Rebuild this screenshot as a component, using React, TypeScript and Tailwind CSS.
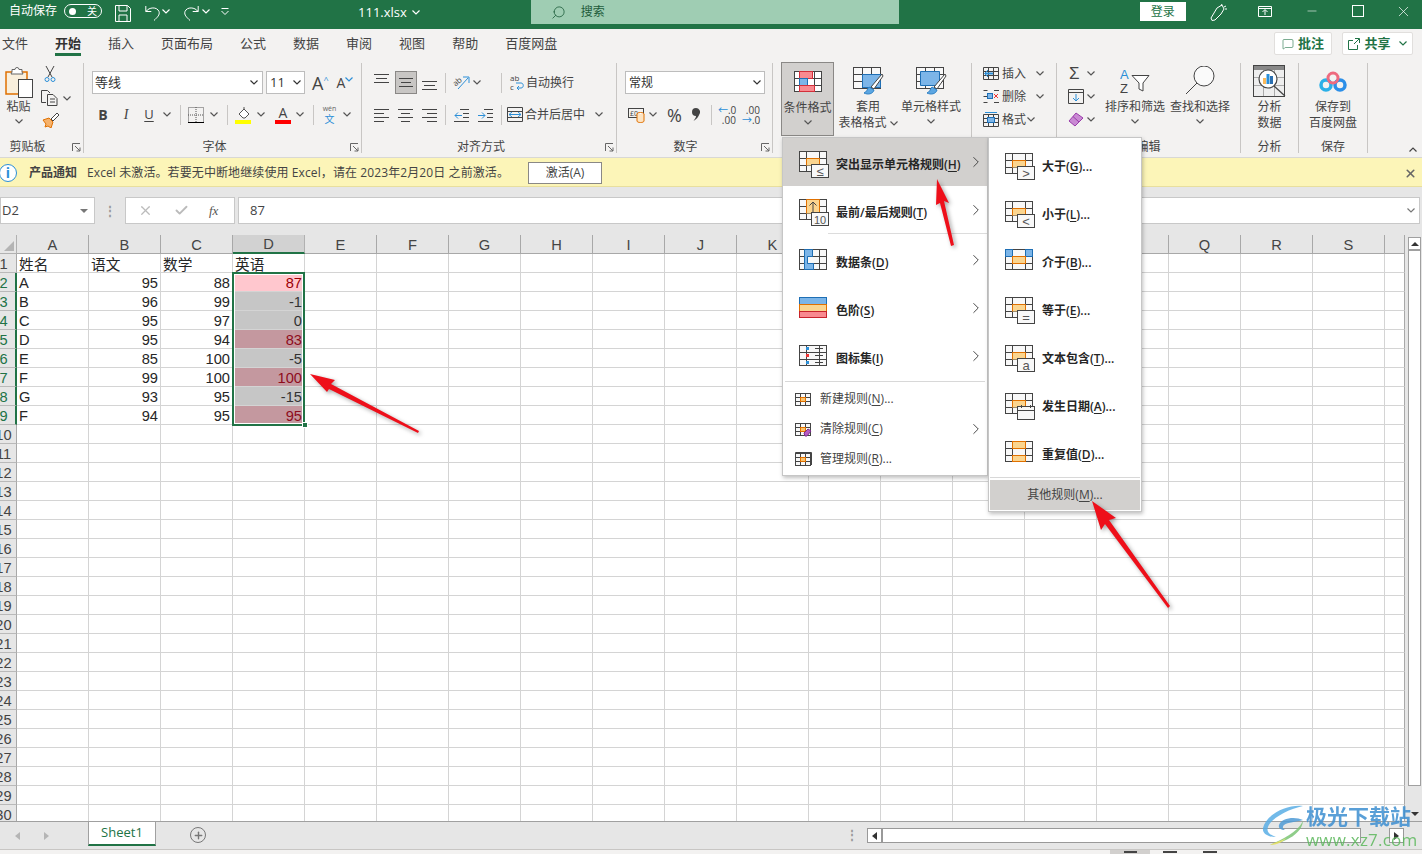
import type { ReactNode } from 'react';
import { Check, ChevronRight, MessageSquare, Minus, Plus, Search, X } from 'lucide-react';

const INK = '#444';
const ORANGE = '#e07000';
const BLUE = '#2b8fd8';

function Chev({ color = '#555', className = '' }: { color?: string; className?: string }) {
  return (
    <svg width="8" height="5" viewBox="0 0 8 5" className={`shrink-0 ${className}`}>
      <path d="M.5.5 4 4 7.5.5" fill="none" stroke={color} strokeWidth="1.2" />
    </svg>
  );
}

function Launcher() {
  return (
    <svg width="9" height="9" viewBox="0 0 9 9" className="absolute bottom-[1px] right-[2px]">
      <path d="M.5 8V.5H8M3 3l5 5M8 4.5V8H4.5" fill="none" stroke="#666" />
    </svg>
  );
}

function Group({ w, label, labelPad = '', launcher, children }: { w: string; label: string; labelPad?: string; launcher?: boolean; children: ReactNode }) {
  return (
    <div className={`relative flex h-full shrink-0 flex-col border-r border-[#c8c6c4] ${w}`}>
      <div className="flex min-h-0 flex-1">{children}</div>
      <div className={`h-[15px] text-center text-[12px] leading-[17px] text-[#444] ${labelPad}`}>{label}</div>
      {launcher && <Launcher />}
    </div>
  );
}

function Lines({ rows, color = INK }: { rows: number[][]; color?: string }) {
  return (
    <svg width="16" height="16" viewBox="0 0 16 16" className="shrink-0">
      {rows.map(([a, b, y]) => (
        <path key={`${a}-${y}`} d={`M${a} ${y + 0.5}H${b}`} stroke={color} />
      ))}
    </svg>
  );
}

function VSep({ className }: { className: string }) {
  return <div className={`h-[20px] w-px shrink-0 bg-[#c8c6c4] ${className}`} />;
}

// the grid drawing most of the conditional format icons start from
function Sheet({ children, badge }: { children?: ReactNode; badge?: ReactNode }) {
  return (
    <svg width="31" height="27" viewBox="0 0 31 27" className="shrink-0">
      <rect x=".5" y=".5" width="27" height="20" fill="#f8f8f8" stroke={INK} />
      <path d="M7.5 0v21M20.5 0v21M0 7.5h28M0 14.5h28" stroke={INK} />
      {children}
      {badge && (
        <g>
          <rect x="12.5" y="13.5" width="17" height="13" fill="#f8f8f8" stroke={INK} />
          {badge}
        </g>
      )}
    </svg>
  );
}

const OrangeCell = () => (
  <path d="M7.5 14.5v-7h13v7" fill="#fbd58f" stroke={ORANGE} />
);

function BadgeText({ t, size = 13 }: { t: string; size?: number }) {
  return (
    <text x="21" y="24.5" textAnchor="middle" fontSize={size} fill="#555" fontFamily="Liberation Sans, sans-serif">
      {t}
    </text>
  );
}

function SmallSheet({ children }: { children?: ReactNode }) {
  return (
    <svg width="17" height="15" viewBox="0 0 17 15" className="shrink-0">
      <rect x=".5" y="1.5" width="15" height="12" fill="#f8f8f8" stroke={INK} />
      <path d="M5.5 1v13M10.5 1v13M0 5.5h16M0 9.5h16" stroke={INK} />
      <rect x="5.5" y="5.5" width="5" height="4" fill="#fbc56f" stroke={ORANGE} />
      {children}
    </svg>
  );
}

function Key({ k }: { k: string }) {
  return (
    <>
      (<span className="underline underline-offset-2">{k}</span>)
    </>
  );
}

function MainItem({ icon, name, k, active }: { icon: ReactNode; name: string; k: string; active?: boolean }) {
  return (
    <div className={`flex h-[48px] items-center pl-[16px] pr-[2px] pt-[5px] ${active ? 'bg-[#d2d0ce]' : ''}`}>
      <div className="w-[37px] shrink-0">{icon}</div>
      <span className="flex-1 text-[12px] font-semibold leading-none text-[#262626]">
        {name}
        <Key k={k} />
      </span>
      <ChevronRight size={18} strokeWidth={1.3} color={INK} className="-mt-[6px]" />
    </div>
  );
}

function SmallItem({ icon, name, k, more }: { icon: ReactNode; name: string; k: string; more?: boolean }) {
  return (
    <div className="flex h-[30px] items-center pl-[12px] pr-[2px]">
      <div className="w-[25px] shrink-0">{icon}</div>
      <span className="flex-1 text-[12px] leading-none text-[#444]">
        {name}
        <Key k={k} />
        {!more && '...'}
      </span>
      {more && <ChevronRight size={18} strokeWidth={1.3} color={INK} />}
    </div>
  );
}

function SubItem({ icon, name, k }: { icon: ReactNode; name: string; k: string }) {
  return (
    <div className="flex h-[48px] items-center pl-[16px] pt-[9px]">
      <div className="w-[37px] shrink-0">{icon}</div>
      <span className="text-[12px] font-semibold leading-none text-[#262626]">
        {name}
        <Key k={k} />
        ...
      </span>
    </div>
  );
}

function ConditionalMenus() {
  return (
    <>
      <div className="absolute left-[782px] top-[137px] z-10 w-[206px] border border-[#c6c6c6] bg-white pb-px shadow-[1px_2px_4px_rgba(0,0,0,0.25)]">
        <MainItem
          active
          name="突出显示单元格规则"
          k="H"
          icon={<Sheet badge={<BadgeText t="≤" />}><OrangeCell /></Sheet>}
        />
        <div className="relative mb-[2px]">
          <MainItem
            name="最前/最后规则"
            k="T"
            icon={
              <Sheet badge={<BadgeText t="10" size={11} />}>
                <path d="M7.5 14.5V.5h13v14" fill="#fbd58f" stroke={ORANGE} />
                <path d="M14 13V3M10.5 6.5 14 3l3.5 3.5" fill="none" stroke={INK} />
              </Sheet>
            }
          />
          <div className="absolute bottom-0 left-[45px] right-0 h-px bg-[#dcdcdc]" />
        </div>
        <MainItem
          name="数据条"
          k="D"
          icon={
            <Sheet>
              <path d="M5.5.5h8v7h-5v7h6v6h-9z" fill="#7cb5e8" stroke="#1e6fb5" />
            </Sheet>
          }
        />
        <MainItem
          name="色阶"
          k="S"
          icon={
            <Sheet>
              <rect x=".5" y=".5" width="27" height="7" fill="#7cb5e8" stroke="#1e6fb5" />
              <rect x=".5" y="7.5" width="27" height="7" fill="#fbd58f" stroke={ORANGE} />
              <rect x=".5" y="14.5" width="27" height="6" fill="#f98a90" stroke="#c8232c" />
            </Sheet>
          }
        />
        <MainItem
          name="图标集"
          k="I"
          icon={
            <Sheet>
              <rect x="7" y="2" width="3" height="3" fill={BLUE} />
              <rect x="7" y="9" width="3" height="3" fill="#e33" />
              <rect x="7" y="16" width="3" height="3" fill={BLUE} />
              <path d="M16 3.5h8M16 10.5h8M16 17.5h8" stroke={INK} />
            </Sheet>
          }
        />
        <div className="mx-[2px] mt-[1px] mb-[2px] h-px bg-[#d8d8d8]" />
        <SmallItem name="新建规则" k="N" icon={<SmallSheet />} />
        <SmallItem
          more
          name="清除规则"
          k="C"
          icon={
            <SmallSheet>
              <path d="M9 11l4-4 3 2-4 5h-2z" fill="#b85bc4" stroke="#7b2f8a" />
            </SmallSheet>
          }
        />
        <SmallItem
          name="管理规则"
          k="R"
          icon={
            <SmallSheet>
              <path d="M.5 1V.5H16.5V13" fill="none" stroke={INK} />
            </SmallSheet>
          }
        />
      </div>

      <div className="absolute left-[988px] top-[137px] z-10 w-[154px] border border-[#c6c6c6] bg-white shadow-[1px_2px_4px_rgba(0,0,0,0.25)]">
        <SubItem name="大于" k="G" icon={<Sheet badge={<BadgeText t=">" />}><OrangeCell /></Sheet>} />
        <SubItem name="小于" k="L" icon={<Sheet badge={<BadgeText t="<" />}><OrangeCell /></Sheet>} />
        <SubItem
          name="介于"
          k="B"
          icon={
            <Sheet>
              <rect x=".5" y=".5" width="7" height="7" fill="#7cb5e8" stroke="#1e6fb5" />
              <rect x="20.5" y=".5" width="7" height="7" fill="#7cb5e8" stroke="#1e6fb5" />
              <rect x="7.5" y="7.5" width="13" height="7" fill="#fbd58f" stroke={ORANGE} />
            </Sheet>
          }
        />
        <SubItem name="等于" k="E" icon={<Sheet badge={<BadgeText t="=" />}><OrangeCell /></Sheet>} />
        <SubItem name="文本包含" k="T" icon={<Sheet badge={<BadgeText t="a" />}><OrangeCell /></Sheet>} />
        <SubItem
          name="发生日期"
          k="A"
          icon={
            <Sheet badge={<path d="M13 17.5h16M16.5 12v3M25.5 12v3" stroke={INK} />}>
              <OrangeCell />
            </Sheet>
          }
        />
        <SubItem
          name="重复值"
          k="D"
          icon={
            <Sheet>
              <rect x="7.5" y=".5" width="13" height="7" fill="#fbd58f" stroke={ORANGE} />
              <rect x="7.5" y="14.5" width="13" height="6" fill="#fbd58f" stroke={ORANGE} />
            </Sheet>
          }
        />
        <div className="mx-[1px] mt-[3px] h-px bg-[#d8d8d8]" />
        <div className="m-[1px] mt-[2px] flex h-[30px] items-center justify-center bg-[#d2d0ce] text-[12px] leading-none text-[#444]">
          其他规则
          <Key k="M" />
          ...
        </div>
      </div>
    </>
  );
}

function TitleBar() {
  return (
    <div className="flex h-[29px] shrink-0 items-start bg-[#217346] text-white">
      <span className="ml-[9px] mt-[4px] text-[12px] leading-[14px]">自动保存</span>
      <div className="ml-[7px] mt-[4px] flex h-[14px] w-[38px] items-center justify-between rounded-full border border-white pl-[4px] pr-[4px]">
        <div className="h-[7px] w-[7px] rounded-full bg-white" />
        <span className="text-[10px] leading-none">关</span>
      </div>
      <svg width="16" height="17" viewBox="0 0 16 17" className="ml-[13px] mt-[5px]">
        <path d="M.5.5h12l3 3v13H.5zM4 .5V6h8V.5M4 16.5V10h8v6.5" fill="none" stroke="#fff" />
      </svg>
      <svg width="15" height="16" viewBox="0 0 15 16" className="ml-[14px] mt-[5px]">
        <path d="M.8 1v5.5h5.5M1 6.5C4 2 12 1.5 14 6.5c1.2 3.5-2 6-5 9" fill="none" stroke="#fff" />
      </svg>
      <Chev color="#fff" className="ml-[2px] mt-[9px]" />
      <svg width="15" height="16" viewBox="0 0 15 16" className="ml-[14px] mt-[5px]">
        <path d="M14.2 1v5.5H8.7M14 6.5C11 2 3 1.5 1 6.5c-1.2 3.5 2 6 5 9" fill="none" stroke="#fff" />
      </svg>
      <Chev color="#fff" className="ml-[3px] mt-[9px]" />
      <svg width="8" height="8" viewBox="0 0 8 8" className="ml-[11px] mt-[8px]">
        <path d="M.5.5h7M.5 3 4 6.5 7.5 3" fill="none" stroke="#fff" />
      </svg>
      <span className="ml-[129px] mt-[4px] text-[13px] leading-[16px]">111.xlsx</span>
      <Chev color="#fff" className="ml-[5px] mt-[10px]" />
      <div className="ml-[111px] flex h-[24px] w-[368px] items-center bg-[#9fcdb3] pl-[20px] text-[#1e5c3b]">
        <Search size={15} strokeWidth={1.3} className="-scale-x-100" />
        <span className="ml-[15px] text-[12px]">搜索</span>
      </div>
      <div className="ml-[241px] mt-[2px] flex h-[19px] w-[46px] items-center justify-center bg-white text-[12px] text-[#217346]">
        登录
      </div>
      <svg width="18" height="18" viewBox="0 0 18 18" className="ml-[24px] mt-[3px]">
        <path d="M1 15 7 5l5-3 2 4-3 5-6 6-3 .5zM11 3l1-2M14 4l2-1M15 6h2" fill="none" stroke="#fff" />
      </svg>
      <svg width="14" height="11" viewBox="0 0 14 11" className="ml-[30px] mt-[6px]">
        <path d="M.5.5h13v10H.5zM.5 2.5h13M7 9V4M4.5 6 7 3.5 9.5 6" fill="none" stroke="#fff" />
      </svg>
      <Minus size={14} strokeWidth={1} className="ml-[33px] mt-[4px]" />
      <div className="ml-[33px] mt-[5px] h-[12px] w-[12px] border border-white" />
      <X size={17} strokeWidth={1} className="ml-[31px] mt-[3px]" />
    </div>
  );
}

function TabRow() {
  const tabs = ['文件', '开始', '插入', '页面布局', '公式', '数据', '审阅', '视图', '帮助', '百度网盘'];
  return (
    <div className="flex h-[30px] shrink-0 items-start bg-[#f3f2f1] pl-[2px]">
      <div className="flex gap-[27px]">
        {tabs.map((t) => (
          <div key={t} className="relative h-[27px] pt-[5px] text-[13px] leading-[18px] text-[#444]">
            <span className={t === '开始' ? 'font-bold text-[#333]' : ''}>{t}</span>
            {t === '开始' && <div className="absolute bottom-0 left-0 right-0 h-[3px] bg-[#217346]" />}
          </div>
        ))}
      </div>
      <div className="ml-auto mt-[3px] flex h-[23px] w-[58px] items-center justify-center gap-[4px] rounded-[2px] border border-[#e1dfdd] bg-white text-[13px] font-bold text-[#217346]">
        <MessageSquare size={12} strokeWidth={1.2} />
        批注
      </div>
      <div className="ml-[10px] mr-[9px] mt-[3px] flex h-[23px] w-[71px] items-center justify-center gap-[4px] rounded-[2px] border border-[#e1dfdd] bg-white text-[13px] font-bold text-[#217346]">
        <svg width="12" height="13" viewBox="0 0 12 13">
          <path d="M7 1.5h4.5V6M11 2 6 7M5 3.5H.5v9h9V8" fill="none" stroke="#217346" />
        </svg>
        共享
        <Chev color="#217346" className="ml-[4px]" />
      </div>
    </div>
  );
}

function ClipboardGroup() {
  return (
    <Group w="w-[84px]" label="剪贴板" labelPad="pr-[28px]" launcher>
      <div className="flex w-[36px] flex-col items-center pl-[1px] pt-[3px]">
        <svg width="28" height="32" viewBox="0 0 28 32">
          <path d="M1 6h21v22H1z" fill="#f9efdc" stroke={ORANGE} strokeWidth="1.5" />
          <path d="M7 6V3.5h3a2 2 0 0 1 4 0h3V6l1 2H6z" fill="#fff" stroke="#666" />
          <rect x="13.5" y="13.5" width="14" height="18" fill="#fff" stroke={INK} />
        </svg>
        <span className="mt-[1px] text-[12px] leading-[16px] text-[#444]">粘贴</span>
        <Chev className="mt-[4px]" />
      </div>
      <div className="flex flex-col pl-[5px] pt-[3px]">
        <svg width="12" height="17" viewBox="0 0 12 17" className="ml-[3px]">
          <path d="M2 0l6 11M10 0 4 11" stroke={INK} fill="none" />
          <circle cx="3" cy="13.5" r="2" fill="none" stroke={BLUE} />
          <circle cx="9" cy="13.5" r="2" fill="none" stroke={BLUE} />
        </svg>
        <div className="mt-[7px] flex items-center">
          <svg width="17" height="16" viewBox="0 0 17 16">
            <path d="M5 12.5H.5V.5h6L9 3M6.5 4.5H12l4 4v7H6.5z" fill="none" stroke={INK} />
            <path d="M9 9h5M9 12h5" stroke={INK} />
          </svg>
          <Chev className="ml-[5px]" />
        </div>
        <svg width="17" height="16" viewBox="0 0 17 16" className="ml-[1px] mt-[6px]">
          <path d="M1 8l6-2 4 4-2 6-3-2-3 1 1-3z" fill="#f6b26b" stroke={ORANGE} />
          <path d="M9 7l6-6 2 2-6 6z" fill="#fff" stroke={INK} />
        </svg>
      </div>
    </Group>
  );
}

function FontGroup() {
  return (
    <Group w="w-[278px]" label="字体" labelPad="pr-[16px]" launcher>
      <div className="flex flex-col pl-[8px] pt-[8px]">
        <div className="flex h-[23px] items-center">
          <div className="flex h-full w-[171px] items-center justify-between border border-[#bdbdbd] bg-white px-[2px] text-[13px] text-[#333]">
            等线
            <Chev color="#333" className="mr-[2px]" />
          </div>
          <div className="ml-[3px] flex h-full w-[39px] items-center justify-between border border-[#bdbdbd] bg-white px-[3px] text-[13px] text-[#333]">
            11
            <Chev color="#333" />
          </div>
          <span className="ml-[7px] text-[18px] leading-none text-[#444]">A</span>
          <span className="mb-[6px] text-[9px] leading-none text-[#2b8fd8]">^</span>
          <span className="ml-[8px] text-[14px] leading-none text-[#444]">A</span>
          <Chev color={BLUE} className="mb-[6px]" />
        </div>
        <div className="mt-[9px] flex h-[23px] items-center text-[#444]">
          <span className="w-[22px] text-center text-[14px] font-bold">B</span>
          <span className="w-[24px] text-center font-['Liberation_Serif',serif] text-[14px] italic">I</span>
          <span className="w-[22px] text-center text-[13px] underline underline-offset-2">U</span>
          <Chev className="ml-[3px]" />
          <VSep className="ml-[9px]" />
          <svg width="16" height="16" viewBox="0 0 16 16" className="ml-[7px]">
            <path d="M.5.5h15v15H.5zM8 0v15M0 8h15" fill="none" stroke="#555" strokeDasharray="1 1" />
            <path d="M0 15.5h16" stroke="#000" />
          </svg>
          <Chev className="ml-[6px]" />
          <VSep className="ml-[9px]" />
          <svg width="17" height="18" viewBox="0 0 17 18" className="ml-[7px]">
            <path d="M4 8l5-5 5 5-4 4H8z" fill="#fff" stroke="#555" />
            <path d="M9 3V1" stroke="#555" />
            <rect x="0" y="14" width="16" height="4" fill="#ffff00" />
          </svg>
          <Chev className="ml-[5px]" />
          <div className="ml-[10px] flex w-[16px] flex-col items-center">
            <span className="text-[14px] leading-[14px] text-[#444]">A</span>
            <div className="h-[4px] w-[16px] bg-[#ff0000]" />
          </div>
          <Chev className="ml-[5px]" />
          <VSep className="ml-[9px]" />
          <div className="ml-[8px] flex w-[15px] flex-col items-center gap-[2px] leading-none">
            <span className="text-[7px] text-[#666]">wén</span>
            <span className="text-[10px] text-[#2b8fd8]">文</span>
          </div>
          <Chev className="ml-[6px]" />
        </div>
      </div>
    </Group>
  );
}

function AlignGroup() {
  return (
    <Group w="w-[255px]" label="对齐方式" labelPad="pr-[16px]" launcher>
      <div className="flex flex-col pl-[11px] pt-[8px]">
        <div className="flex h-[23px] items-center">
          <div className="mb-[5px] ml-[1px]"><Lines rows={[[0, 15, 2], [2, 13, 6], [0, 15, 10]]} /></div>
          <div className="ml-[5px] flex h-[23px] w-[22px] items-center justify-center border border-[#8a8886] bg-[#c8c6c4]">
            <Lines rows={[[1, 15, 3], [3, 13, 7], [1, 15, 11]]} />
          </div>
          <div className="ml-[5px] mt-[7px]"><Lines rows={[[0, 15, 3], [2, 13, 7], [0, 15, 11]]} /></div>
          <VSep className="ml-[7px]" />
          <svg width="17" height="17" viewBox="0 0 17 17" className="ml-[7px] overflow-visible">
            <text x="0" y="10" fontSize="8" fill="#444" fontFamily="Open Sans, sans-serif" transform="rotate(-40 5 8)">ab</text>
            <path d="M5 15 15 4M10 3h6v6" fill="none" stroke={BLUE} />
          </svg>
          <Chev className="ml-[3px]" />
          <VSep className="ml-[20px]" />
          <svg width="14" height="17" viewBox="0 0 14 17" className="ml-[8px] overflow-visible">
            <text x="0" y="7" fontSize="8" fill="#444" fontFamily="Open Sans, sans-serif">ab</text>
            <text x="0" y="16" fontSize="8" fill="#444" fontFamily="Open Sans, sans-serif">c</text>
            <path d="M7 14h4c3 0 3-5 0-5H6M9 12l-2 2 2 2" fill="none" stroke={BLUE} />
          </svg>
          <span className="ml-[2px] text-[12px] text-[#444]">自动换行</span>
        </div>
        <div className="mt-[9px] flex h-[23px] items-center">
          <div className="ml-[1px]"><Lines rows={[[0, 15, 2], [0, 10, 6], [0, 15, 10], [0, 10, 14]]} /></div>
          <div className="ml-[8px]"><Lines rows={[[0, 15, 2], [3, 12, 6], [0, 15, 10], [3, 12, 14]]} /></div>
          <div className="ml-[8px]"><Lines rows={[[0, 15, 2], [5, 15, 6], [0, 15, 10], [5, 15, 14]]} /></div>
          <VSep className="ml-[7px]" />
          <svg width="16" height="16" viewBox="0 0 16 16" className="ml-[8px]">
            <path d="M6 2.5h9M9 6.5h6M9 10.5h6M0 14.5h15" stroke={INK} />
            <path d="M8 8.5H1M4 5.5l-3 3 3 3" fill="none" stroke={BLUE} />
          </svg>
          <svg width="16" height="16" viewBox="0 0 16 16" className="ml-[8px]">
            <path d="M6 2.5h9M9 6.5h6M9 10.5h6M0 14.5h15" stroke={INK} />
            <path d="M0 8.5h7M4 5.5l3 3-3 3" fill="none" stroke={BLUE} />
          </svg>
          <VSep className="ml-[7px]" />
          <svg width="16" height="15" viewBox="0 0 16 15" className="ml-[5px]">
            <path d="M.5.5h15v14H.5zM0 4.5h16M0 10.5h16" fill="none" stroke={INK} />
            <path d="M2 7.5h12M5 5 2 7.5 5 10M11 5l3 2.5L11 10" fill="none" stroke={BLUE} />
          </svg>
          <span className="ml-[2px] text-[12px] text-[#444]">合并后居中</span>
          <Chev className="ml-[10px]" />
        </div>
      </div>
    </Group>
  );
}

function NumberGroup() {
  return (
    <Group w="w-[156px]" label="数字" labelPad="pr-[18px]" launcher>
      <div className="flex flex-col pl-[8px] pt-[8px]">
        <div className="flex h-[23px] w-[140px] items-center justify-between border border-[#bdbdbd] bg-white px-[3px] text-[12px] text-[#333]">
          常规
          <Chev color="#333" />
        </div>
        <div className="mt-[9px] flex h-[23px] items-center text-[#444]">
          <svg width="17" height="17" viewBox="0 0 17 17" className="ml-[3px]">
            <rect x=".5" y="2.5" width="15" height="9" fill="none" stroke={INK} />
            <text x="2" y="10" fontSize="7" fill="#444" fontFamily="Open Sans, sans-serif">£0</text>
            <ellipse cx="12.5" cy="8" rx="3.5" ry="1.5" fill="#fff" stroke={ORANGE} />
            <path d="M9 8v7c0 2 7 2 7 0V8" fill="#fce4c4" stroke={ORANGE} />
          </svg>
          <Chev className="ml-[4px]" />
          <span className="ml-[10px] text-[18px] leading-none">%</span>
          <svg width="8" height="13" viewBox="0 0 8 13" className="ml-[10px]">
            <path d="M4 0a4 4 0 0 1 3.500 6c-1 3-3 5-6 7 1.500-2 2.500-3.500 2.500-5A4 4 0 0 1 4 0z" fill={INK} />
          </svg>
          <VSep className="ml-[11px]" />
          <div className="ml-[6px] flex w-[18px] flex-col text-[10px] leading-[10px]">
            <span className="whitespace-nowrap text-right"><span className="text-[#2b8fd8]">←</span>.0</span>
            <span className="text-right">.00</span>
          </div>
          <div className="ml-[6px] flex w-[18px] flex-col text-right text-[10px] leading-[10px]">
            <span>.00</span>
            <span className="whitespace-nowrap"><span className="text-[#2b8fd8]">→</span>.0</span>
          </div>
        </div>
      </div>
    </Group>
  );
}

function BrushGrid({ fill }: { fill: ReactNode }) {
  return (
    <svg width="31" height="29" viewBox="0 0 31 29">
      <rect x=".5" y=".5" width="27" height="21" fill="#f8f8f8" stroke={INK} />
      <path d="M9.5 0v21M18.5 0v21M0 7.5h28M0 14.5h28" stroke={INK} />
      {fill}
      <path d="M29 7 18 20l3 2L30 9z" fill="#fff" stroke={INK} />
      <path d="M16 20c-2 2-2 5-5 6 4 2 9 1 10-3z" fill="#5ba6e2" stroke="#2b7fc4" />
    </svg>
  );
}

function LargeBtn({ w, active, icon, lines, chevLine }: { w: string; active?: boolean; icon: ReactNode; lines: string[]; chevLine?: boolean }) {
  return (
    <div className={`-mt-[1px] flex h-[74px] shrink-0 flex-col items-center pt-[4px] ${w} ${active ? 'border border-[#8a8886] bg-[#d2d0ce]' : ''}`}>
      <div className="flex h-[30px] items-center">{icon}</div>
      <div className="mt-[3px] text-center text-[12px] leading-[16px] text-[#444]">
        {lines.map((l, i) => (
          <div key={l} className="flex items-center justify-center whitespace-nowrap">
            {l}
            {chevLine && i === lines.length - 1 && <Chev className="ml-[3px]" />}
          </div>
        ))}
      </div>
      {!chevLine && lines.length === 1 && <Chev className="mt-[4px]" />}
    </div>
  );
}

function StylesGroup() {
  return (
    <Group w="w-[199px]" label="样式">
      <div className="flex pl-[8px]">
        <LargeBtn
          active
          w="w-[53px]"
          lines={['条件格式']}
          icon={
            <svg width="28" height="22" viewBox="0 0 28 22">
              <rect x=".5" y=".5" width="27" height="20" fill="#fff" stroke={INK} />
              <path d="M7.5 0v21M20.5 0v21M0 7.5h28M0 14.5h28" stroke={INK} />
              <rect x="5.5" y=".5" width="13" height="7" fill="#f98a90" stroke="#d32f3a" />
              <rect x="5.5" y="7.5" width="8" height="7" fill="#7cb5e8" stroke="#1e6fb5" />
              <rect x="5.5" y="14.5" width="15" height="6" fill="#f98a90" stroke="#d32f3a" />
            </svg>
          }
        />
        <div className="ml-[4px]">
          <LargeBtn
            chevLine
            w="w-[60px]"
            lines={['套用', '表格格式']}
            icon={
              <BrushGrid
                fill={<path d="M9.5 7.5h18v13h-18z" fill="#7cb5e8" stroke="#1e6fb5" />}
              />
            }
          />
        </div>
        <div className="ml-[3px]">
          <LargeBtn
            w="w-[60px]"
            lines={['单元格样式']}
            icon={
              <BrushGrid
                fill={<path d="M4.5 4.5h19v14h-19z" fill="#7cb5e8" stroke="#1e6fb5" />}
              />
            }
          />
        </div>
      </div>
    </Group>
  );
}

function CellsGroup() {
  return (
    <Group w="w-[85px]" label="单元格">
      <div className="-mt-[1px] flex flex-col pl-[11px] text-[12px] leading-none text-[#444]">
        <div className="flex h-[23px] items-center">
          <svg width="17" height="14" viewBox="0 0 17 14">
            <path d="M.5.5h15v12H.5zM0 4.5h16M0 8.5h16M5.5 1v12M10.5 1v12" fill="none" stroke={INK} />
            <path d="M2 6.5h8" stroke={BLUE} strokeWidth="2" />
            <path d="M5 3 1.5 6.5 5 10" fill="none" stroke={BLUE} />
          </svg>
          <span className="ml-[2px]">插入</span>
          <Chev className="ml-[10px]" />
        </div>
        <div className="flex h-[23px] items-center">
          <svg width="17" height="14" viewBox="0 0 17 14">
            <path d="M.5.5h4M11 .5h5M.5 12.5h4M11 12.5h5M.5 6.5h4" fill="none" stroke={INK} />
            <rect x="4.5" y="3.5" width="5" height="5" fill="#7cb5e8" stroke="#1e6fb5" />
            <path d="M11 4l4 4M15 4l-4 4" stroke="#e33" />
          </svg>
          <span className="ml-[2px]">删除</span>
          <Chev className="ml-[10px]" />
        </div>
        <div className="flex h-[23px] items-center">
          <svg width="17" height="15" viewBox="0 0 17 15">
            <path d="M.5 2.5h15v12H.5zM0 6.5h16M0 10.5h16M5.5 3v12M10.5 3v12" fill="none" stroke={INK} />
            <rect x="4.5" y="5.5" width="7" height="5" fill="#7cb5e8" stroke="#1e6fb5" />
            <path d="M2 .5h12" stroke={BLUE} />
          </svg>
          <span className="ml-[2px]">格式</span>
          <Chev className="ml-[1px]" />
        </div>
      </div>
    </Group>
  );
}

function EditGroup() {
  return (
    <Group w="w-[184px]" label="编辑">
      <div className="flex">
        <div className="-mt-[1px] flex w-[46px] flex-col pl-[11px]">
          <div className="flex h-[23px] items-center">
            <span className="ml-[1px] w-[15px] font-['Liberation_Sans',sans-serif] text-[17px] leading-none text-[#444]">Σ</span>
            <Chev className="ml-[3px]" />
          </div>
          <div className="flex h-[23px] items-center">
            <svg width="16" height="15" viewBox="0 0 16 15">
              <path d="M.5.5h15v14H.5zM0 3.5h16" fill="none" stroke={INK} />
              <path d="M8 5v7M5 9l3 3 3-3" fill="none" stroke={BLUE} />
            </svg>
            <Chev className="ml-[3px]" />
          </div>
          <div className="flex h-[23px] items-center">
            <svg width="16" height="15" viewBox="0 0 16 15">
              <path d="M8 1 15 6 7 14 1 9z" fill="#c98ad3" stroke="#9a3dab" />
              <path d="M5 4.5 11 10" stroke="#9a3dab" />
            </svg>
            <Chev className="ml-[3px]" />
          </div>
        </div>
        <div className="ml-[2px]">
          <LargeBtn
            w="w-[60px]"
            lines={['排序和筛选']}
            icon={
              <svg width="30" height="28" viewBox="0 0 30 28">
                <text x="0" y="12" fontSize="13" fill={BLUE} fontFamily="Liberation Sans, sans-serif">A</text>
                <text x="0" y="26" fontSize="13" fill="#444" fontFamily="Liberation Sans, sans-serif">Z</text>
                <path d="M12 8.5h17L23 16v8l-4-2v-6z" fill="#fff" stroke={INK} />
              </svg>
            }
          />
        </div>
        <div className="ml-[5px]">
          <LargeBtn
            w="w-[60px]"
            lines={['查找和选择']}
            icon={
              <svg width="30" height="30" viewBox="0 0 30 30">
                <circle cx="19" cy="10" r="10" fill="#fafafa" stroke={INK} />
                <path d="M12 17 1 28" stroke={INK} />
              </svg>
            }
          />
        </div>
      </div>
    </Group>
  );
}

function AnalysisGroup() {
  return (
    <Group w="w-[58px]" label="分析">
      <LargeBtn
        w="w-[57px]"
        lines={['分析', '数据']}
        icon={
          <svg width="33" height="33" viewBox="0 0 33 33">
            <rect x=".5" y=".5" width="31" height="31" fill="#eee" stroke={INK} />
            <rect x="1" y="1" width="30" height="4" fill="#888" />
            <path d="M10.5 5v26M21.5 5v26M1 12.5h30M1 20.5h30" stroke="#aaa" />
            <circle cx="15" cy="14" r="9" fill="#fff" stroke={INK} strokeWidth="1.2" />
            <path d="M21 21l11 10" stroke={INK} strokeWidth="1.2" />
            <rect x="10" y="13" width="3" height="6" fill="#fab95b" />
            <rect x="13.5" y="9" width="3" height="10" fill={BLUE} />
            <rect x="17" y="11" width="3" height="8" fill="#2b6fb0" />
          </svg>
        }
      />
    </Group>
  );
}

function SaveGroup() {
  return (
    <Group w="w-[69px]" label="保存">
      <LargeBtn
        w="w-[68px]"
        lines={['保存到', '百度网盘']}
        icon={
          <svg width="28" height="22" viewBox="0 0 28 22">
            <circle cx="7" cy="15" r="5" fill="none" stroke="#2ab0e8" strokeWidth="3.500" />
            <circle cx="21" cy="15" r="5" fill="none" stroke="#2c8fe8" strokeWidth="3.500" />
            <circle cx="14" cy="8" r="5" fill="none" stroke="#ee6a7e" strokeWidth="3" />
          </svg>
        }
      />
    </Group>
  );
}

function Ribbon() {
  return (
    <div className="flex h-[98px] shrink-0 items-stretch bg-[#f3f2f1] py-[4px]">
      <ClipboardGroup />
      <FontGroup />
      <AlignGroup />
      <NumberGroup />
      <StylesGroup />
      <CellsGroup />
      <EditGroup />
      <AnalysisGroup />
      <SaveGroup />
      <div className="flex flex-1 items-end justify-end pb-[1px] pr-[5px]">
        <Chev color="#444" className="rotate-180" />
      </div>
    </div>
  );
}

function NoticeBar() {
  return (
    <div className="flex h-[30px] shrink-0 items-center border-b border-t border-b-[#e8df9e] border-t-[#d8d8d4] bg-[#fcf5b8] pt-[2px] text-[12px] text-[#444]">
      <div className="relative h-[18px] w-[18px] shrink-0 -translate-x-[1px] rounded-full border border-[#2b8fd8] bg-white text-center text-[14px] font-bold leading-[15px] text-[#2b8fd8]">
        i
      </div>
      <span className="ml-[11px] font-bold">产品通知</span>
      <span className="ml-[10px] tracking-[0.1px]">Excel 未激活。若要无中断地继续使用 Excel，请在 2023年2月20日 之前激活。</span>
      <div className="ml-[19px] flex h-[22px] w-[74px] items-center justify-center border border-[#8a8886] bg-white">激活(A)</div>
      <X size={13} strokeWidth={3} color="#666" className="ml-auto mr-[5px]" />
    </div>
  );
}

function FormulaBar() {
  return (
    <div className="flex h-[48px] shrink-0 items-start bg-[#e6e6e6] pt-[10px]">
      <div className="flex h-[27px] w-[95px] items-center justify-between border border-[#c8c8c8] bg-white px-[1px] pr-[6px] text-[13px] text-[#444]">
        D2
        <div className="h-0 w-0 border-l-[4px] border-r-[4px] border-t-[4px] border-l-transparent border-r-transparent border-t-[#777]" />
      </div>
      <div className="flex h-[27px] w-[30px] items-center justify-center text-[12px] font-bold leading-none text-[#999]">⋮</div>
      <div className="flex h-[27px] w-[110px] items-center border border-[#c8c8c8] bg-white pl-[12px] text-[#aaa]">
        <X size={15} strokeWidth={2} color="#bbb" />
        <Check size={15} strokeWidth={3} color="#bbb" className="ml-[21px]" />
        <span className="ml-[20px] font-['Liberation_Serif',serif] text-[13px] italic text-[#555]">fx</span>
      </div>
      <div className="ml-[3px] mr-[2px] flex h-[27px] flex-1 items-center justify-between border border-[#c8c8c8] bg-white pl-[11px] pr-[4px] text-[13px] text-[#444]">
        87
        <Chev color="#777" />
      </div>
    </div>
  );
}

const COLS = 'ABCDEFGHIJKLMNOPQRS'.split('');
const HEAD: Record<string, string> = { A: '姓名', B: '语文', C: '数学', D: '英语' };
const ROWS: [string, number, number, number][] = [
  ['A', 95, 88, 87],
  ['B', 96, 99, -1],
  ['C', 95, 97, 0],
  ['D', 95, 94, 83],
  ['E', 85, 100, -5],
  ['F', 99, 100, 100],
  ['G', 93, 95, -15],
  ['F', 94, 95, 95],
];

function dCell(v: number, row: number) {
  if (row === 0) return 'bg-[#ffc7ce] text-[#9c0006]';
  if (v <= 0) return 'bg-[#c6c6c6] text-[#333]';
  return 'bg-[#c4989f] text-[#8e0c1c]';
}

function SheetGrid() {
  return (
    <div className="relative flex min-h-0 flex-1 overflow-hidden bg-white font-['Liberation_Sans','Noto_Sans_CJK_SC',sans-serif] text-[14.67px] text-[#262626]">
      <div className="flex min-w-0 flex-1 flex-col">
        <div className="flex h-[19px] shrink-0 bg-[#e6e6e6] text-[#444]">
          <div className="relative w-[17px] shrink-0 border-b border-r border-[#b1b1b1]">
            <div className="absolute bottom-[2px] right-[2px] h-0 w-0 border-b-[10px] border-l-[10px] border-b-[#b4b4b4] border-l-transparent" />
          </div>
          {COLS.map((c) => (
            <div
              key={c}
              className={`flex w-[72px] shrink-0 items-center justify-center border-r pt-[2px] leading-none ${
                c === 'D' ? 'border-b-2 border-r-[#b1b1b1] border-b-[#217346] bg-[#d2d2d2]' : 'border-b border-[#a8a8a8]'
              }`}
            >
              {c}
            </div>
          ))}
          <div className="w-[20px] shrink-0 border-b border-r border-[#a8a8a8]" />
        </div>
        {Array.from({ length: 30 }, (_, i) => {
          const rowNo = i + 1;
          const data = i >= 1 && i <= 8 ? ROWS[i - 1] : null;
          return (
            <div key={rowNo} className="flex h-[19px] shrink-0">
              <div
                className={`flex w-[17px] shrink-0 overflow-hidden border-b border-[#b9b9b9] bg-[#e6e6e6] pt-[1px] leading-[18px] text-[#444] ${
                  data ? 'border-r-2 border-r-[#217346] bg-[#d2d2d2] text-[#217346]' : 'border-r border-r-[#a8a8a8]'
                }`}
              >
                <div className="flex w-[7px] shrink-0 justify-center">{rowNo}</div>
              </div>
              {COLS.map((c, ci) => {
                let text: string | number = '';
                let cls = 'justify-start pt-[1px]';
                if (rowNo === 1 && HEAD[c]) {
                  text = HEAD[c];
                  cls = 'justify-start pt-[2px]';
                }
                if (data && ci === 0) text = data[0];
                if (data && ci > 0 && ci < 4) {
                  text = data[ci];
                  cls = 'justify-end pt-[1px]';
                }
                if (data && ci === 3) cls = `justify-end pt-[1px] ${dCell(data[3], i - 1)}`;
                return (
                  <div
                    key={c}
                    className={`flex w-[72px] shrink-0 items-start whitespace-nowrap border-b border-r border-[#d4d4d4] px-[2px] leading-[18px] ${cls}`}
                  >
                    {text}
                  </div>
                );
              })}
              <div className="w-[20px] shrink-0 border-b border-r border-[#d4d4d4] border-r-[#a8a8a8]" />
            </div>
          );
        })}
        {/* selected range over D2:D9 */}
        <div className="absolute left-[232px] top-[37px] h-[154px] w-[73px] border-2 border-[#217346] shadow-[inset_0_0_0_1px_#fff]" />
        <div className="absolute left-[302px] top-[187px] h-[6px] w-[6px] border border-white bg-[#217346]" />
      </div>
      <div className="flex w-[17px] shrink-0 flex-col items-end bg-[#e6e6e6] pr-px pt-[2px]">
        <div className="flex h-[14px] w-[13px] items-center justify-center border border-b-2 border-[#a0a0a0] bg-white">
          <div className="h-0 w-0 border-b-[4px] border-l-[4px] border-r-[4px] border-b-[#333] border-l-transparent border-r-transparent" />
        </div>
        <div className="h-[535px] w-[13px] border border-t-0 border-[#a0a0a0] bg-white" />
        <div className="mt-[21px] flex h-[14px] w-[13px] items-center justify-center">
          <div className="h-0 w-0 border-l-[4px] border-r-[4px] border-t-[4px] border-l-transparent border-r-transparent border-t-[#333]" />
        </div>
      </div>
    </div>
  );
}

function SheetTabs() {
  return (
    <div className="flex h-[28px] shrink-0 items-start border-t border-[#a0a0a0] bg-[#e6e6e6] text-[#999]">
      <div className="ml-[15px] mt-[10px] h-0 w-0 border-b-[4px] border-r-[5px] border-t-[4px] border-b-transparent border-r-[#b5b5b5] border-t-transparent" />
      <div className="ml-[24px] mt-[10px] h-0 w-0 border-b-[4px] border-l-[5px] border-t-[4px] border-b-transparent border-l-[#b5b5b5] border-t-transparent" />
      <div className="ml-[39px] flex h-[24px] w-[68px] items-center justify-center border-b-[2px] border-l border-r border-b-[#217346] border-l-[#a0a0a0] border-r-[#a0a0a0] bg-white text-[13px] text-[#217346]">
        Sheet1
      </div>
      <div className="ml-[34px] mt-[5px] flex h-[16px] w-[16px] items-center justify-center rounded-full border border-[#777] text-[#777]">
        <Plus size={11} strokeWidth={3} />
      </div>
      <div className="ml-[640px] mt-[7px] text-[12px] font-bold leading-none text-[#999]">⋮</div>
      <div className="ml-[9px] mt-[6px] flex h-[15px] w-[15px] items-center justify-center border border-[#999] bg-white">
        <div className="h-0 w-0 border-b-[4px] border-r-[5px] border-t-[4px] border-b-transparent border-r-[#333] border-t-transparent" />
      </div>
      <div className="mt-[6px] h-[15px] w-[479px] border border-[#999] bg-white" />
      <div className="ml-[28px] mt-[6px] flex h-[15px] w-[15px] items-center justify-center border border-[#999] bg-white">
        <div className="h-0 w-0 border-b-[4px] border-l-[5px] border-t-[4px] border-b-transparent border-l-[#333] border-t-transparent" />
      </div>
    </div>
  );
}

function StatusBar() {
  return (
    <div className="flex h-[5px] shrink-0 border-t border-[#c8c6c4] bg-[#f3f2f1]">
      <div className="ml-[1110px] flex h-full w-[40px] justify-center bg-[#d2d0ce]">
        <div className="mt-[1px] h-[2px] w-[13px] bg-[#444]" />
      </div>
      <div className="flex h-full w-[40px] justify-center">
        <div className="mt-[1px] h-[2px] w-[14px] bg-[#444]" />
      </div>
      <div className="flex h-full w-[40px] justify-center">
        <div className="mt-[1px] h-[2px] w-[14px] bg-[#444]" />
      </div>
    </div>
  );
}

function Arrows() {
  const shapes = [
    '310,374 335,380 331,384 419,431 418,433 329,389 327,392',
    '937,179 949,203 944,201 954,245 951,246 940,203 936,205',
    '1092,501 1116,518 1109,520 1170,606 1168,608 1105,524 1101,530',
  ];
  return (
    <svg className="pointer-events-none absolute left-0 top-0 z-20 drop-shadow-[2px_2px_2px_rgba(0,0,0,0.35)]" width="1422" height="854">
      {shapes.map((p) => (
        <polygon key={p} points={p} fill="#ee0f1a" />
      ))}
    </svg>
  );
}

function Watermark() {
  return (
    <div className="absolute left-[1262px] top-[804px] z-20 flex opacity-85">
      <svg width="44" height="42" viewBox="0 0 44 42" className="shrink-0">
        <path d="M41 2C26 0 4 10 1 24c-1 6 6 9 13 9-6-2-10-5-8-10C9 14 27 5 41 2z" fill="#5aaee6" />
        <path d="M41 16c-8-4-22-2-24 5-1 3 2 5 6 5-2-1-3-3-1-5 4-3 12-3 19-5z" fill="#4e9bd6" />
        <path d="M41 17c-1 12-16 21-33 24 12-6 27-12 33-24z" fill="#7cc576" />
        <path d="M8 41c5-3 12-4 16-7-3 4-9 7-16 7z" fill="#e8e05a" />
      </svg>
      <div className="flex flex-col">
        <span className="whitespace-nowrap text-[21px] font-bold leading-[24px] text-[#3d8fd1]">极光下载站</span>
        <span className="mt-[2px] whitespace-nowrap font-['Open_Sans',sans-serif] text-[17px] leading-[20px] tracking-[0.2px] text-[#5cb85c]">www.xz7.com</span>
      </div>
    </div>
  );
}

export default function App() {
  return (
    <div className="relative flex h-[854px] w-[1422px] flex-col overflow-hidden font-['Open_Sans','Noto_Sans_CJK_SC',sans-serif]">
      <TitleBar />
      <TabRow />
      <Ribbon />
      <NoticeBar />
      <FormulaBar />
      <SheetGrid />
      <SheetTabs />
      <StatusBar />
      <ConditionalMenus />
      <Arrows />
      <Watermark />
    </div>
  );
}
